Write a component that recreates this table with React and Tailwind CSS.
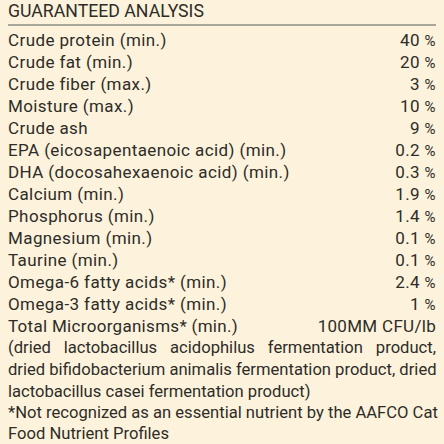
import React from "react";

const rows = [
  ["Crude protein (min.)", "40"],
  ["Crude fat (min.)", "20"],
  ["Crude fiber (max.)", "3"],
  ["Moisture (max.)", "10"],
  ["Crude ash", "9"],
  ["EPA (eicosapentaenoic acid) (min.)", "0.2"],
  ["DHA (docosahexaenoic acid) (min.)", "0.3"],
  ["Calcium (min.)", "1.9"],
  ["Phosphorus (min.)", "1.4"],
  ["Magnesium (min.)", "0.1"],
  ["Taurine (min.)", "0.1"],
  ["Omega-6 fatty acids* (min.)", "2.4"],
  ["Omega-3 fatty acids* (min.)", "1"],
];

const App = () => {
  return (
    <div className="w-[444px] h-[444px] overflow-hidden bg-[#fdf3dc] text-[#2e2c28] font-['Roboto',sans-serif] text-[17px] leading-[22px] px-[8px]">
      <div className="uppercase text-[17.7px] h-[22px] leading-[22px]">Guaranteed Analysis</div>
      <div className="h-[2px] bg-[#aaa89a] mt-[2px] mb-[3px]"></div>
      {rows.map(([label, value]) => (
        <div key={label} className="flex justify-between h-[22px] tracking-[0.4px]">
          <span>{label}</span>
          <span>
            {value} <span className="text-[15px] leading-none">%</span>
          </span>
        </div>
      ))}
      <div className="flex justify-between h-[22px] tracking-[0.3px]">
        <span>Total Microorganisms* (min.)</span>
        <span>100MM CFU/lb</span>
      </div>
      <div className="text-[16.6px]">
        <div className="h-[22px] text-justify [text-align-last:justify] whitespace-nowrap">(dried lactobacillus acidophilus fermentation product,</div>
        <div className="h-[22px] text-justify [text-align-last:justify] whitespace-nowrap">dried bifidobacterium animalis fermentation product, dried</div>
        <div className="h-[22px] whitespace-nowrap">lactobacillus casei fermentation product)</div>
      </div>
      <div className="text-[16.6px] leading-[20.5px]">
        <div className="text-justify [text-align-last:justify] whitespace-nowrap">*Not recognized as an essential nutrient by the AAFCO Cat</div>
        <div className="whitespace-nowrap">Food Nutrient Profiles</div>
      </div>
    </div>
  );
};

export default App;
